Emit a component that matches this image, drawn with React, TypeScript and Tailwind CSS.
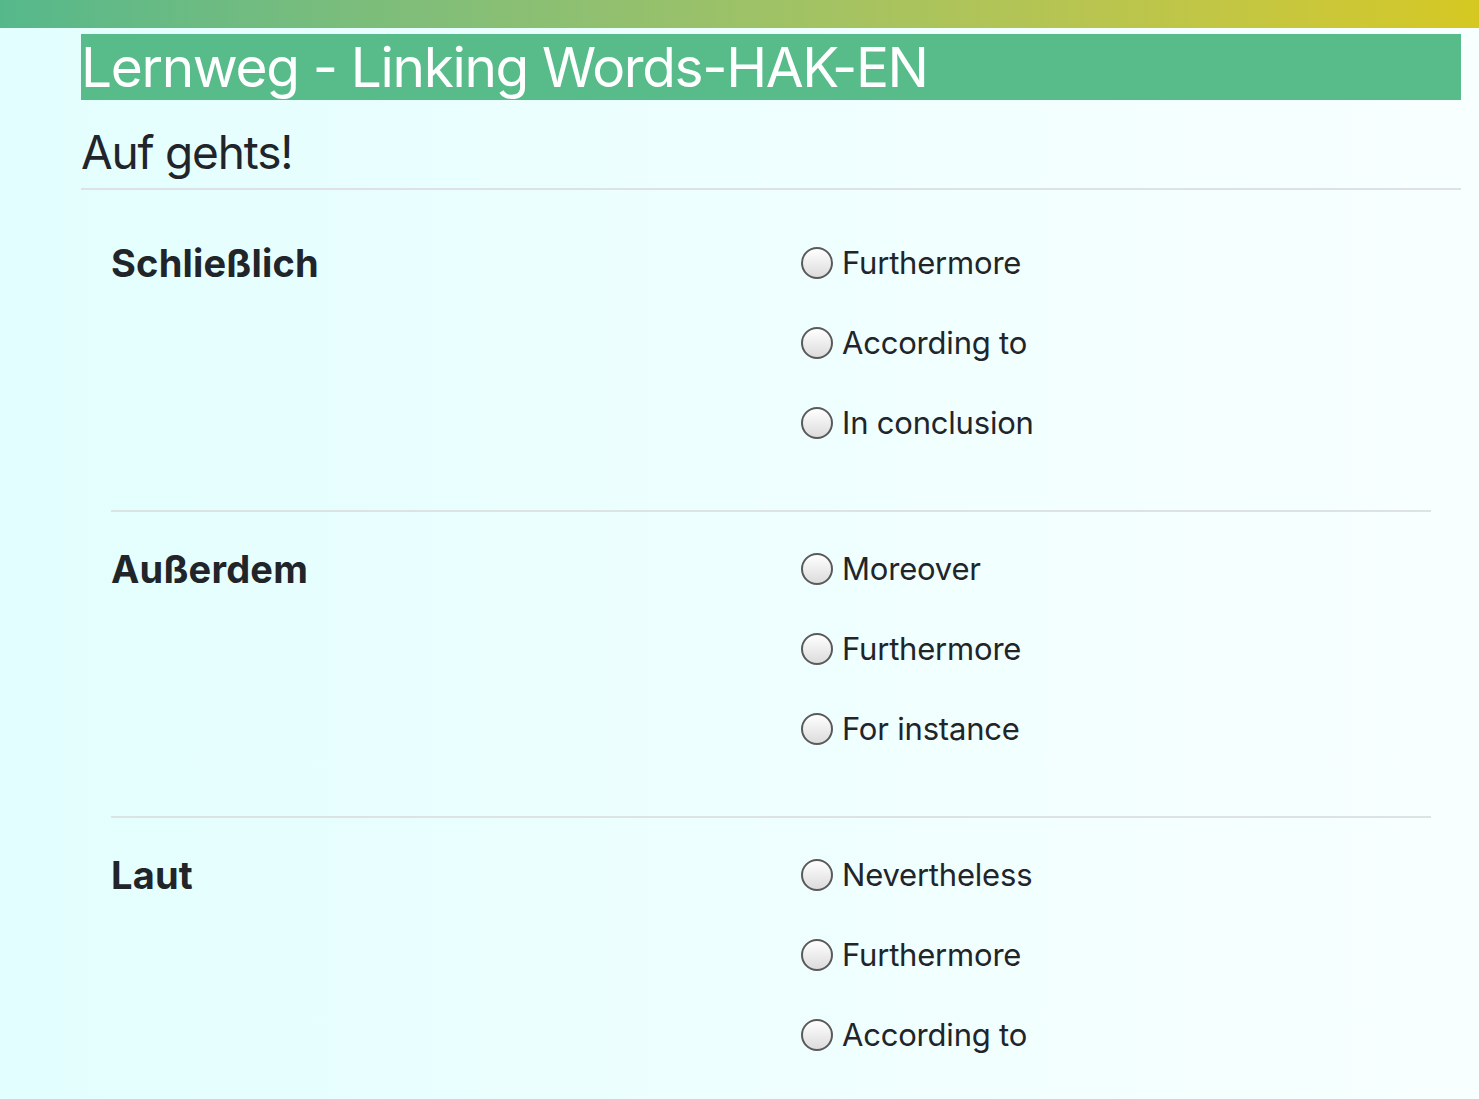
const sections = [
  { label: 'Schließlich', options: ['Furthermore', 'According to', 'In conclusion'] },
  { label: 'Außerdem', options: ['Moreover', 'Furthermore', 'For instance'] },
  { label: 'Laut', options: ['Nevertheless', 'Furthermore', 'According to'] },
]

function Radio() {
  return (
    <span className="w-8 h-8 shrink-0 rounded-full border-2 border-[#5a5a5a] bg-gradient-to-b from-white to-[#dcdcdc]" />
  )
}

function Question({ label, options, first }: { label: string; options: string[]; first: boolean }) {
  return (
    <div className={first ? 'flex pt-[47px] pb-[61px]' : 'flex pt-[31px] pb-[61px] border-t-2 border-[#dde3e3]'}>
      <div className="w-[690px] shrink-0 text-[38px] font-bold leading-[52px] tracking-[0.2px] text-[#212529]">
        {label}
      </div>
      <div className="flex flex-col gap-[28px]">
        {options.map((o, i) => (
          <label key={i} className="flex items-center gap-[9px] h-[52px] text-[31px] text-[#212529] tracking-[-0.2px]">
            <Radio />
            <span>{o}</span>
          </label>
        ))}
      </div>
    </div>
  )
}

export default function App() {
  return (
    <div className="min-h-[1099px] bg-gradient-to-r from-[#e3fefe] to-[#f8ffff] font-['Inter',sans-serif] overflow-hidden">
      <div className="h-[28px] bg-gradient-to-r from-[#55b88b] to-[#d5c820]" />
      <div className="pl-[81px] pr-[18px] pt-[6px]">
        <h1 className="h-[66px] bg-[#57bb8a] text-white text-[55px] leading-[66px] tracking-[-1.35px] whitespace-nowrap">
          Lernweg - Linking Words-HAK-EN
        </h1>
        <div className="h-[90px] border-b-2 border-[#dee2e6] text-[46px] leading-[104px] text-[#212529] tracking-[-1.2px]">
          Auf gehts!
        </div>
        <div className="px-[30px]">
          {sections.map((s, i) => (
            <Question key={i} label={s.label} options={s.options} first={i === 0} />
          ))}
        </div>
      </div>
    </div>
  )
}
